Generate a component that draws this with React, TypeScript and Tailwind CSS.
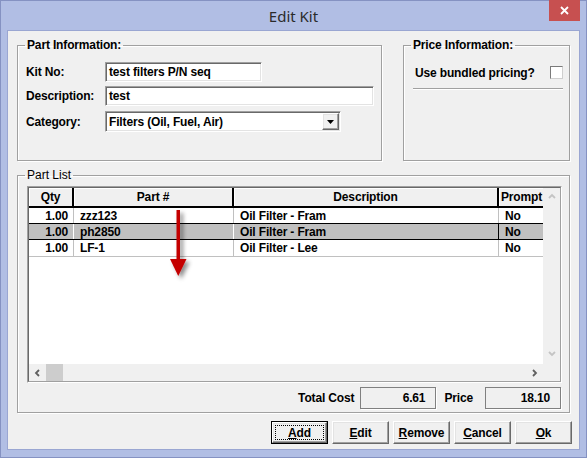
import type { ReactNode } from "react";

const sunken =
  "bg-white border border-t-[#a0a0a0] border-l-[#a0a0a0] border-r-white border-b-white shadow-[inset_1px_1px_0_#696969,inset_-1px_-1px_0_#e3e3e3]";
const raised =
  "bg-[#f0f0f0] border border-t-white border-l-white border-r-[#696969] border-b-[#696969] shadow-[inset_-1px_-1px_0_#a0a0a0,inset_1px_1px_0_#e3e3e3]";
const groupBox =
  "border border-[#a0a0a0] shadow-[1px_1px_0_#fff,inset_1px_1px_0_#fff] px-[7px] min-w-0";

const rows = [
  { qty: "1.00", part: "zzz123", desc: "Oil Filter - Fram", prompt: "No", line: "border-b-black h-[16px]" },
  { qty: "1.00", part: "ph2850", desc: "Oil Filter - Fram", prompt: "No", line: "border-b-black h-[16px]", selected: true },
  { qty: "1.00", part: "LF-1", desc: "Oil Filter - Lee", prompt: "No", line: "border-b-[#c0c0c0] h-[17px]" },
];

function Chevron({ dir, color }: { dir: "up" | "down" | "left" | "right"; color: string }) {
  const d = {
    up: "M1 5 L4 2 L7 5",
    down: "M1 2 L4 5 L7 2",
    left: "M5 1 L2 4 L5 7",
    right: "M2 1 L5 4 L2 7",
  }[dir];
  return (
    <svg width="8" height="8" viewBox="0 0 8 8">
      <path d={d} fill="none" stroke={color} strokeWidth="1.8" />
    </svg>
  );
}

function Button({ children, focused }: { children: ReactNode; focused?: boolean }) {
  if (focused) {
    return (
      <div className="w-[57px] h-[23px] border border-black">
        <div className={`${raised} w-full h-full flex items-center justify-center p-[2px]`}>
          <div className="w-full h-full border border-dotted border-black flex items-center justify-center font-bold">
            {children}
          </div>
        </div>
      </div>
    );
  }
  return (
    <div className={`${raised} w-[57px] h-[23px] flex items-center justify-center font-bold`}>
      {children}
    </div>
  );
}

export default function App() {
  return (
    <div className="w-[587px] h-[458px] bg-[#b1bee4] border border-[#8592c2] flex flex-col font-['Liberation_Sans',Arial,sans-serif] text-[12px] tracking-[-0.15px] leading-[14px] text-black select-none">
      {/* title bar */}
      <div className="h-[29px] grid grid-cols-[1fr_auto_1fr]">
        <div />
        <div className="font-['Noto_Sans',sans-serif] text-[15px] tracking-normal text-[#2b2b2b] leading-[20px] pt-[5px]">
          Edit Kit
        </div>
        <div className="flex justify-end pr-[6px]">
          <div className="w-[31px] h-[21px] -mt-px bg-[#c75050] flex items-center justify-center">
            <svg width="9" height="9" viewBox="0 0 9 9">
              <path d="M1 1 L8 8 M8 1 L1 8" stroke="#fff" strokeWidth="1.8" />
            </svg>
          </div>
        </div>
      </div>

      {/* client */}
      <div className="flex-1 mx-[6px] mb-[7px] bg-[#f0f0f0] border border-[#9aa6d2] flex flex-col pt-[7px] pl-[9px]">
        <div className="flex gap-[21px]">
          <fieldset className={`${groupBox} w-[365px] h-[123px] pt-[10px]`}>
            <legend className="px-[2px] font-bold">Part Information:</legend>
            <div className="grid grid-cols-[79px_auto] gap-y-[4px] pl-[1px] items-center">
              <span className="font-bold">Kit No:</span>
              <div className={`${sunken} w-[157px] h-[20px] flex items-center pl-[3px] font-bold`}>
                test filters P/N seq
              </div>
              <span className="font-bold">Description:</span>
              <div className={`${sunken} w-[269px] h-[20px] flex items-center pl-[3px] font-bold`}>test</div>
              <span className="font-bold mt-[1px]">Category:</span>
              <div className={`${sunken} w-[236px] h-[21px] mt-[1px] flex items-center font-bold`}>
                <span className="flex-1 pl-[3px]">Filters (Oil, Fuel, Air)</span>
                <div className={`${raised} w-[17px] h-[17px] mr-[1px] flex items-center justify-center`}>
                  <svg width="7" height="4" viewBox="0 0 7 4">
                    <path d="M0 0 H7 L3.5 4 Z" fill="#000" />
                  </svg>
                </div>
              </div>
            </div>
          </fieldset>

          <fieldset className={`${groupBox} w-[167px] h-[123px] pt-[14px] pr-[6px]`}>
            <legend className="px-[2px] font-bold">Price Information:</legend>
            <div className="flex items-center justify-between h-[13px] pl-[4px]">
              <span className="font-bold">Use bundled pricing?</span>
              <div className="w-[13px] h-[13px] bg-white border border-t-[#7a7a7a] border-l-[#7a7a7a] border-r-[#cfcfcf] border-b-[#cfcfcf]" />
            </div>
            <div className="mt-[9px] ml-[2px] border-t border-[#a0a0a0] shadow-[0_1px_0_#fff]" />
          </fieldset>
        </div>

        <fieldset className={`${groupBox} w-[553px] h-[245px] mt-[7px] pt-[4px]`}>
          <legend className="px-[2px] tracking-normal">Part List</legend>

          <div className="ml-[2px] w-[535px] h-[197px] border border-t-[#a0a0a0] border-l-[#a0a0a0] border-r-white border-b-white">
            <div className="w-full h-full border border-t-[#696969] border-l-[#696969] border-r-[#a0a0a0] border-b-[#a0a0a0] flex">
              <div className="w-[514px] flex flex-col bg-white relative overflow-hidden">
                <div className="grid grid-cols-[45px_160px_265px_44px] h-[20px] font-bold">
                  <div className="bg-[#f0f0f0] border-r-2 border-b-2 border-black shadow-[inset_1px_1px_0_#fff] flex items-center justify-center">
                    Qty
                  </div>
                  <div className="bg-[#f0f0f0] border-r-2 border-b-2 border-black shadow-[inset_1px_1px_0_#fff] flex items-center justify-center">
                    Part #
                  </div>
                  <div className="bg-[#f0f0f0] border-r-2 border-b-2 border-black shadow-[inset_1px_1px_0_#fff] flex items-center justify-center">
                    Description
                  </div>
                  <div className="bg-[#f0f0f0] border-b-2 border-black shadow-[inset_1px_1px_0_#fff] flex items-center pl-[2px] whitespace-nowrap overflow-hidden">
                    Prompt
                  </div>
                </div>

                {rows.map((r) => (
                  <div
                    key={r.part}
                    className={`grid grid-cols-[45px_160px_265px_44px] border-b font-bold ${r.line} ${
                      r.selected ? "bg-[#c0c0c0]" : "bg-white"
                    }`}
                  >
                    <div className={`border-r ${r.selected ? "border-white" : "border-[#c0c0c0]"} flex items-center justify-end pr-[5px]`}>
                      {r.qty}
                    </div>
                    <div className={`border-r ${r.selected ? "border-white" : "border-[#c0c0c0]"} flex items-center pl-[6px]`}>
                      {r.part}
                    </div>
                    <div className={`border-r ${r.selected ? "border-black" : "border-[#c0c0c0]"} flex items-center pl-[6px]`}>
                      {r.desc}
                    </div>
                    <div className="flex items-center pl-[6px]">{r.prompt}</div>
                  </div>
                ))}

                <div className="flex-1" />

                <div className="h-[17px] bg-[#f0f0f0] flex items-center">
                  <div className="w-[17px] flex justify-center">
                    <Chevron dir="left" color="#606060" />
                  </div>
                  <div className="w-[17px] h-full bg-[#cdcdcd]" />
                  <div className="flex-1" />
                  <div className="w-[17px] flex justify-center">
                    <Chevron dir="right" color="#606060" />
                  </div>
                </div>

                {/* red annotation arrow */}
                <svg className="absolute left-[136px] top-[18px]" width="34" height="80" viewBox="0 0 34 80">
                  <defs>
                    <filter id="sh" x="-50%" y="-20%" width="200%" height="150%">
                      <feDropShadow dx="3" dy="3" stdDeviation="2" floodColor="#000" floodOpacity="0.45" />
                    </filter>
                  </defs>
                  <g filter="url(#sh)">
                    <rect x="11.5" y="4" width="3.5" height="51" fill="#c40000" />
                    <path d="M5 53 H21.5 L13.25 70 Z" fill="#c40000" />
                  </g>
                </svg>
              </div>

              <div className="flex-1 bg-[#f0f0f0] flex flex-col items-center">
                <div className="mt-[5px]">
                  <Chevron dir="up" color="#c4c4c4" />
                </div>
                <div className="flex-1" />
                <div className="mb-[23px]">
                  <Chevron dir="down" color="#c4c4c4" />
                </div>
              </div>
            </div>
          </div>

          <div className="mt-[4px] h-[22px] flex items-center justify-end pr-[1px] font-bold">
            <span>Total Cost</span>
            <div className="ml-[6px] w-[76px] h-[22px] border border-[#808080] shadow-[1px_1px_0_#fff] flex items-center justify-end pr-[10px]">
              6.61
            </div>
            <span className="ml-[8px]">Price</span>
            <div className="ml-[12px] w-[76px] h-[22px] border border-[#808080] shadow-[1px_1px_0_#fff] flex items-center justify-end pr-[10px]">
              18.10
            </div>
          </div>
        </fieldset>

        <div className="mt-[8px] w-[555px] flex justify-end gap-[4px]">
          <Button focused>
            <u>A</u>dd
          </Button>
          <Button>
            <u>E</u>dit
          </Button>
          <Button>
            <u>R</u>emove
          </Button>
          <Button>
            <u>C</u>ancel
          </Button>
          <Button>
            <u>O</u>k
          </Button>
        </div>
      </div>
    </div>
  );
}
